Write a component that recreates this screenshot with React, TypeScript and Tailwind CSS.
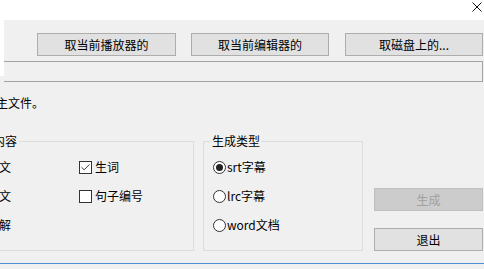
import { Check } from 'lucide-react'

function Btn({ label, className = '', disabled = false }: { label: string; className?: string; disabled?: boolean }) {
  return (
    <button
      type="button"
      disabled={disabled}
      className={
        'flex h-[23px] items-center justify-center border text-[12px] leading-4 ' +
        (disabled
          ? 'border-[#bfbfbf] bg-[#cccccc] text-[#a0a0a0] '
          : 'border-[#adadad] bg-[#e1e1e1] text-black ') +
        className
      }
    >
      {label}
    </button>
  )
}

function CheckItem({ label, checked = false }: { label: string; checked?: boolean }) {
  return (
    <div className="flex h-4 items-center gap-[3px]">
      <span className="flex h-[13px] w-[13px] items-center justify-center border border-[#333] bg-white">
        {checked && <Check className="h-[11px] w-[11px] text-[#222]" strokeWidth={2} />}
      </span>
      <span>{label}</span>
    </div>
  )
}

function RadioItem({ label, checked = false }: { label: string; checked?: boolean }) {
  return (
    <div className="flex h-4 items-center gap-[1px]">
      <span className="flex h-[13px] w-[13px] items-center justify-center rounded-full border border-[#333] bg-white">
        {checked && <span className="h-[7px] w-[7px] rounded-full bg-[#222]" />}
      </span>
      <span>{label}</span>
    </div>
  )
}

export default function App() {
  return (
    <div className="h-[269px] w-[484px] overflow-hidden bg-[#f0f0f0] font-['Microsoft_YaHei','Noto_Sans_CJK_SC',sans-serif] text-[12px] leading-4 text-black">
      {/* title bar */}
      <div className="flex h-5 items-start justify-end bg-white pr-[2px] pt-[2px]">
        <svg width="10" height="10" viewBox="0 0 10 10" className="mr-[0px]">
          <path d="M0.5 0.5 L9.5 9.5 M9.5 0.5 L0.5 9.5" stroke="#111" strokeWidth="1" />
        </svg>
      </div>

      <div className="flex">
        <div className="h-[56px] w-1 bg-white" />
        <div className="flex-1">
          <div className="flex pl-[33px] pt-[13px]">
            <Btn label="取当前播放器的" className="w-[139px]" />
            <Btn label="取当前编辑器的" className="ml-[15px] w-[138px]" />
            <Btn label="取磁盘上的..." className="ml-[16px] w-[138px]" />
          </div>
          <div className="mr-[1px] mt-[5px] h-[21px] border-y border-r border-[#a3a3a3]" />
        </div>
      </div>

      <p className="-ml-[4px] mt-[13px]">主文件。</p>

      <div className="mt-[22px] flex">
        <fieldset className="-ml-[40px] h-[118px] w-[234px] border border-[#dcdcdc] px-[10px] pt-[10px]">
          <legend className="ml-[20px] px-[2px]">内容</legend>
          <div className="grid grid-cols-[108px_1fr] gap-y-[13px]">
            <CheckItem label="原文" checked />
            <CheckItem label="生词" checked />
            <CheckItem label="译文" />
            <CheckItem label="句子编号" />
            <CheckItem label="注解" />
          </div>
        </fieldset>

        <fieldset className="ml-[9px] h-[118px] w-[160px] border border-[#dcdcdc] pl-[9px] pt-[10px]">
          <legend className="-ml-[2px] px-[1px]">生成类型</legend>
          <div className="flex flex-col gap-[13px]">
            <RadioItem label="srt字幕" checked />
            <RadioItem label="lrc字幕" />
            <RadioItem label="word文档" />
          </div>
        </fieldset>

        <div className="ml-[11px] flex w-[109px] flex-col gap-[17px] pt-[55px]">
          <Btn label="生成" disabled className="w-full" />
          <Btn label="退出" className="w-full" />
        </div>
      </div>

      <div className="mt-[12px] h-[1px] bg-[#4a90d9]" />
    </div>
  )
}
